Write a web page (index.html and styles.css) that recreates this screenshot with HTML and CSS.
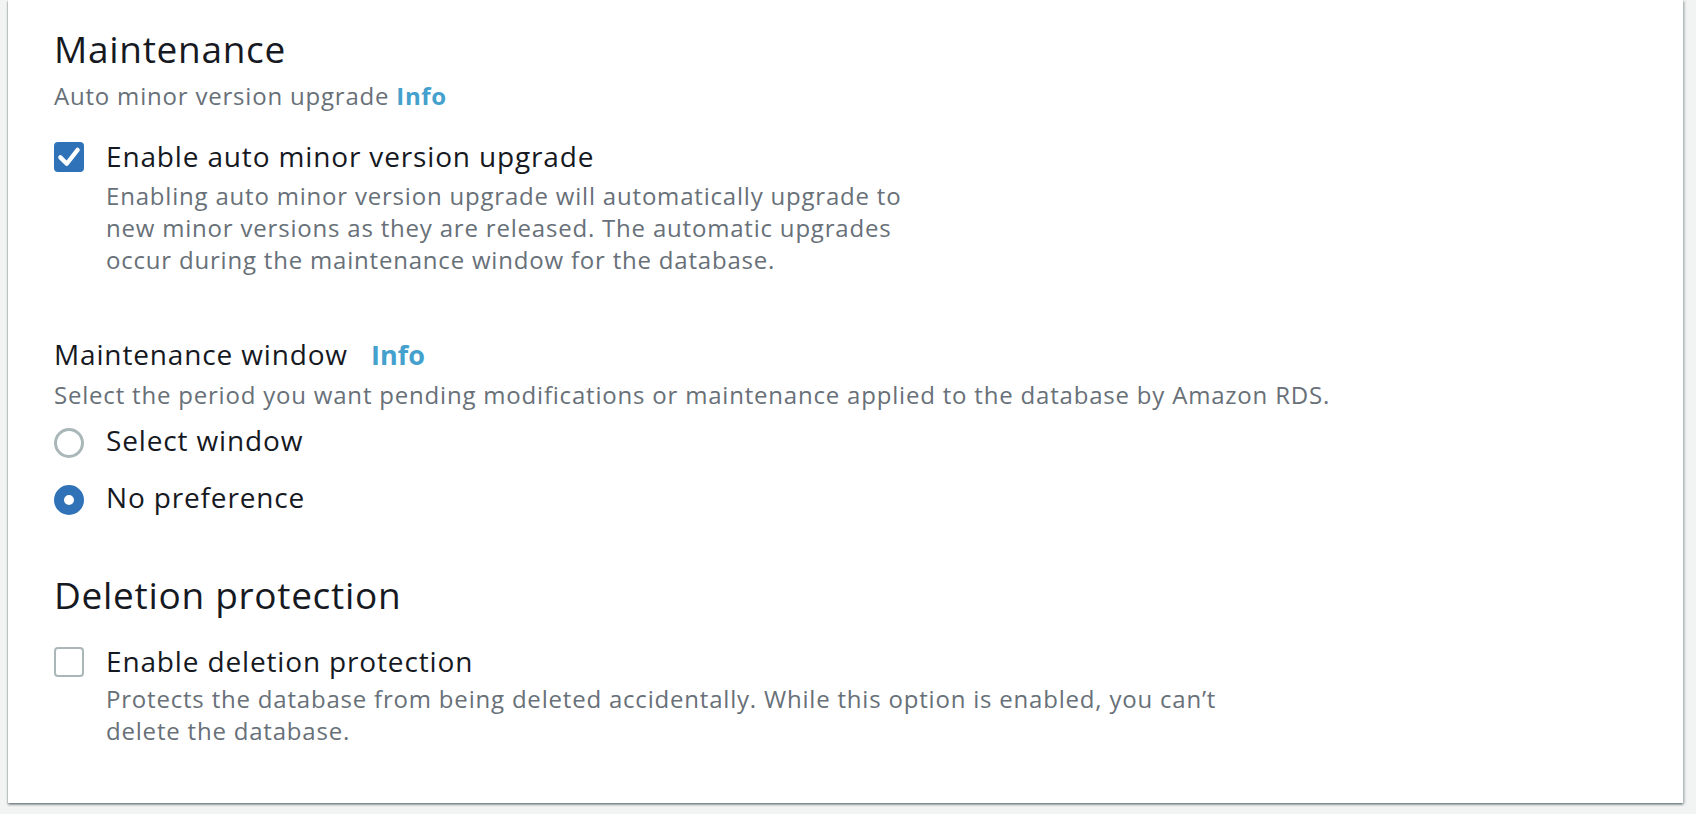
FILE: index.html
```html
<!DOCTYPE html>
<html lang="en">
<head>
<meta charset="utf-8">
<title>Maintenance</title>
<link rel="stylesheet" href="styles.css">
</head>
<body>
<div class="page">
  <section class="card">
    <h2 class="heading">Maintenance</h2>
    <div class="desc sub">Auto minor version upgrade <a class="info">Info</a></div>

    <div class="check-row first-check">
      <span class="checkbox checked">
        <svg viewBox="0 0 16 16" width="30" height="30"><polyline points="3.4,8.2 6.8,11.6 12.6,4.2" fill="none" stroke="#fff" stroke-width="2.3" stroke-linecap="round" stroke-linejoin="round"/></svg>
      </span>
      <div class="check-text">
        <div class="label">Enable auto minor version upgrade</div>
        <div class="desc under narrow">Enabling auto minor version upgrade will automatically upgrade to new minor versions as they are released. The automatic upgrades occur during the maintenance window for the database.</div>
      </div>
    </div>

    <div class="field window-field">
      <div class="label">Maintenance window <a class="info label-info">Info</a></div>
      <div class="desc under">Select the period you want pending modifications or maintenance applied to the database by Amazon RDS.</div>
      <div class="radios">
        <div class="radio-row">
          <span class="radio"></span>
          <span class="label">Select window</span>
        </div>
        <div class="radio-row">
          <span class="radio checked"></span>
          <span class="label">No preference</span>
        </div>
      </div>
    </div>

    <h2 class="heading second">Deletion protection</h2>
    <div class="check-row second-check">
      <span class="checkbox"></span>
      <div class="check-text">
        <div class="label">Enable deletion protection</div>
        <div class="desc under-tight wide">Protects the database from being deleted accidentally. While this option is enabled, you can’t delete the database.</div>
      </div>
    </div>
  </section>
</div>
</body>
</html>
```

FILE: styles.css
```css
html, body {
  margin: 0;
  padding: 0;
  overflow: hidden;
}

body {
  background: #f2f3f3;
  font-family: "Open Sans", "Noto Sans", sans-serif;
  color: #16191f;
}

.page {
  padding: 0 13px 12px 8px;
}

.card {
  background: #ffffff;
  box-shadow: 0 2px 2px 0 rgba(0, 28, 36, 0.35), 2px 1px 2px 0 rgba(0, 28, 36, 0.18), -1px 1px 1px 0 rgba(0, 28, 36, 0.12);
  padding: 27px 40px 56px 46px;
  display: flex;
  flex-direction: column;
}

.heading {
  margin: 0;
  font-size: 37px;
  line-height: 44px;
  font-weight: 400;
  letter-spacing: 0.7px;
  color: #16191f;
}

.heading.second {
  margin-top: 58px;
}

.desc {
  font-size: 24px;
  line-height: 32px;
  letter-spacing: 0.8px;
  color: #687078;
}

.sub {
  margin-top: 9px;
}

.under {
  margin-top: 6px;
}

.under-tight {
  margin-top: 4px;
}

.narrow {
  max-width: 820px;
}

.wide {
  max-width: 1150px;
}

.info {
  color: #44a0cc;
  font-weight: 700;
  letter-spacing: 0.6px;
  text-decoration: none;
}

.label-info {
  margin-left: 15px;
  font-size: 27px;
  letter-spacing: 0;
}

.label {
  font-size: 28px;
  line-height: 36px;
  letter-spacing: 0.85px;
  color: #16191f;
}

.check-row {
  display: flex;
  align-items: flex-start;
  gap: 22px;
}

.first-check {
  margin-top: 26px;
}

.second-check {
  margin-top: 26px;
}

.checkbox {
  flex: none;
  box-sizing: border-box;
  width: 30px;
  height: 30px;
  margin-top: 4px;
  border: 2px solid #aab7b8;
  border-radius: 4px;
  background: #fff;
  display: flex;
  align-items: center;
  justify-content: center;
}

.checkbox.checked {
  background: #3072b8;
  border-color: #3072b8;
}

.checkbox svg {
  display: block;
  flex: none;
}

.window-field {
  margin-top: 60px;
}

.radios {
  margin-top: 11px;
  display: flex;
  flex-direction: column;
  gap: 21px;
}

.radio-row {
  display: flex;
  align-items: flex-start;
  gap: 22px;
}

.radio {
  flex: none;
  box-sizing: border-box;
  width: 30px;
  height: 30px;
  margin-top: 6px;
  border: 3px solid #aab7b8;
  border-radius: 50%;
  background: #fff;
}

.radio.checked {
  border: 10px solid #3072b8;
}
```
